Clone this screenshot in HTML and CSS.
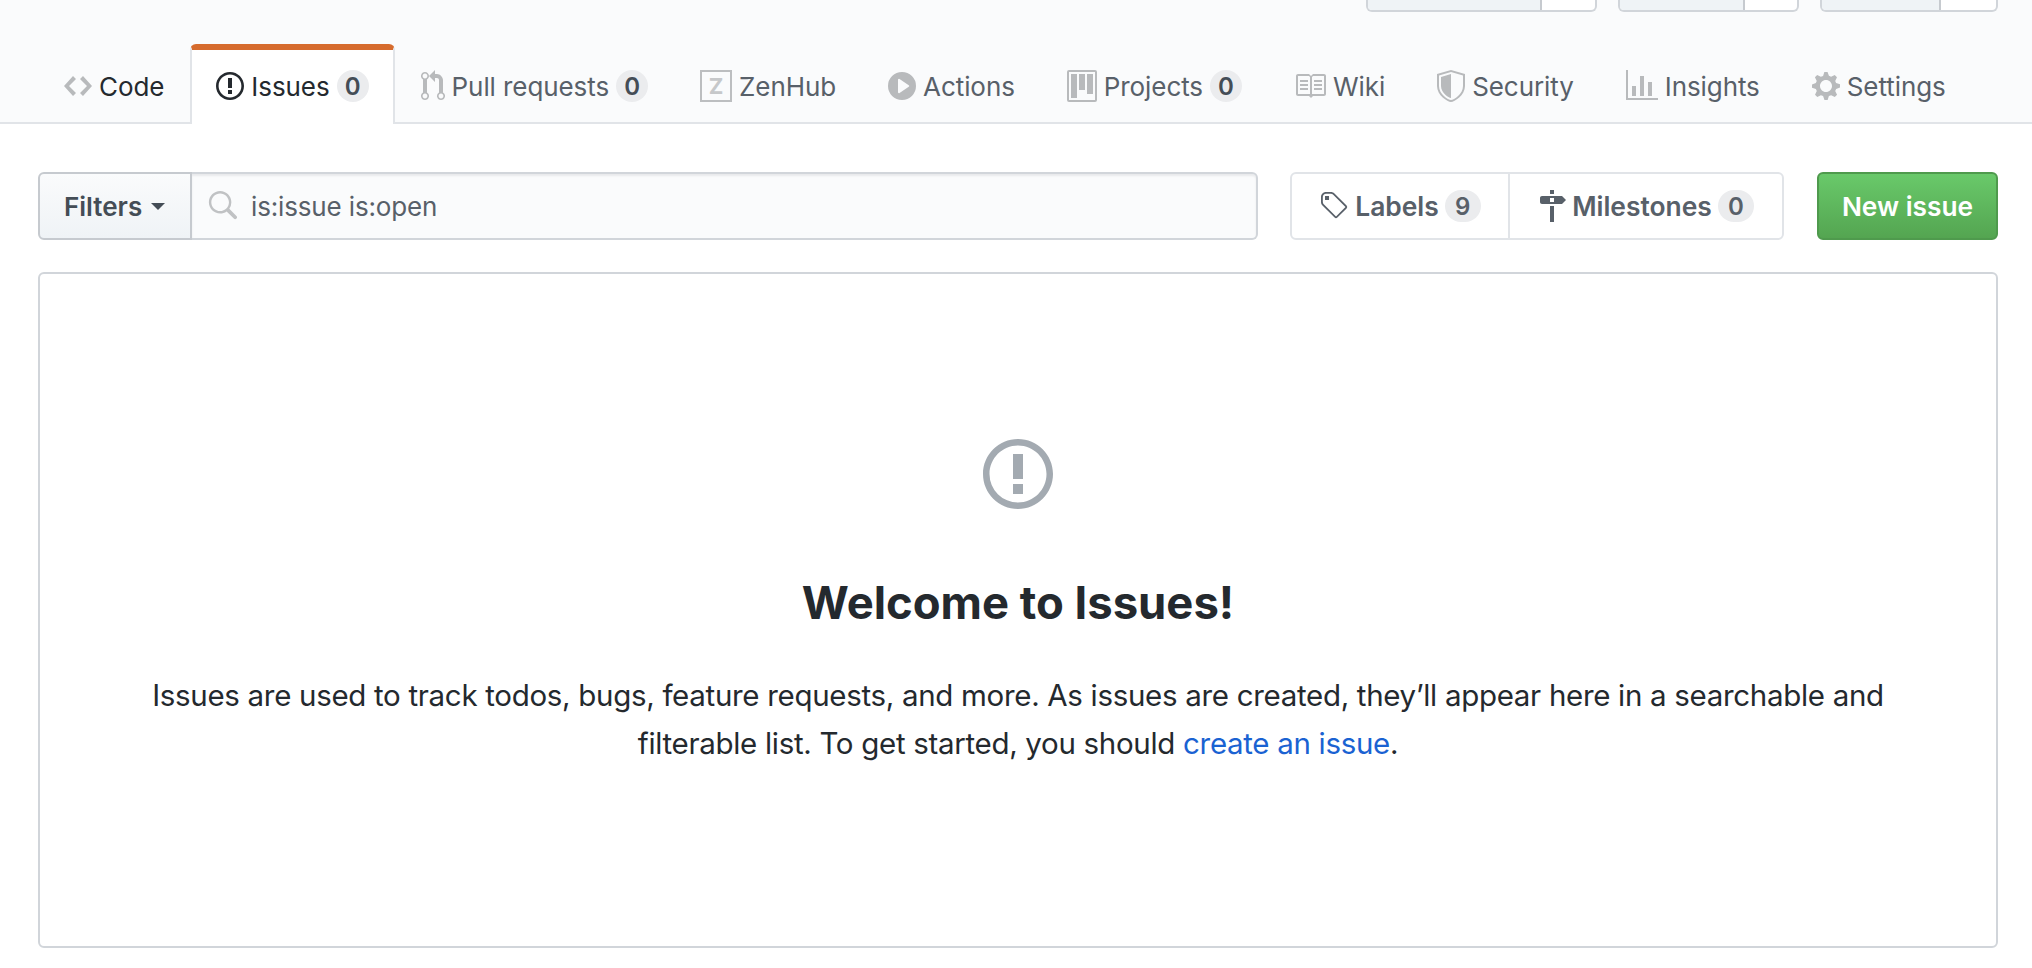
FILE: index.html
```html
<!DOCTYPE html>
<html lang="en">
<head>
<meta charset="utf-8">
<title>Issues</title>
<link rel="stylesheet" href="styles.css">
</head>
<body>
<header class="head">
  <div class="actions">
    <div class="action w1"><span class="action-main"></span><span class="action-count"></span></div>
    <div class="action w2"><span class="action-main"></span><span class="action-count"></span></div>
    <div class="action w3"><span class="action-main"></span><span class="action-count"></span></div>
  </div>
  <nav class="tabs">
    <a class="tab t-code"><svg class="ico" width="28" height="32" viewBox="0 0 14 16"><path d="M9.5 3L8 4.5 11.5 8 8 11.5 9.5 13 14 8 9.5 3zm-5 0L0 8l4.5 5L6 11.5 2.5 8 6 4.5 4.5 3z"/></svg><span class="label-strong">Code</span></a>
    <a class="tab active"><svg class="ico" width="28" height="32" viewBox="0 0 14 16"><path d="M7 2.3c3.14 0 5.7 2.56 5.7 5.7s-2.56 5.7-5.7 5.7A5.71 5.71 0 011.3 8c0-3.14 2.56-5.7 5.7-5.7zM7 1C3.14 1 0 4.14 0 8s3.14 7 7 7 7-3.14 7-7-3.14-7-7-7zm1 3H6v5h2V4zm0 6H6v2h2v-2z"/></svg><span>Issues</span><span class="counter">0</span></a>
    <a class="tab"><svg class="ico" width="24" height="32" viewBox="0 0 12 16"><path d="M11 11.28V5c-.03-.78-.34-1.47-.94-2.06C9.46 2.35 8.78 2.03 8 2H7V0L4 3l3 3V4h1c.27.02.48.11.69.31.21.2.3.42.31.69v6.28A1.993 1.993 0 0010 15a1.993 1.993 0 001-3.72zm-1 2.92c-.66 0-1.2-.55-1.2-1.2 0-.65.55-1.2 1.2-1.2.65 0 1.2.55 1.2 1.2 0 .65-.55 1.2-1.2 1.2zM4 3c0-1.11-.89-2-2-2a1.993 1.993 0 00-1 3.72v6.56A1.993 1.993 0 002 15a1.993 1.993 0 001-3.72V4.72c.59-.34 1-.98 1-1.72zm-.8 10c0 .66-.55 1.2-1.2 1.2-.65 0-1.2-.55-1.2-1.2 0-.65.55-1.2 1.2-1.2.65 0 1.2.55 1.2 1.2zM2 4.2C1.34 4.2.8 3.65.8 3c0-.65.55-1.2 1.2-1.2.65 0 1.2.55 1.2 1.2 0 .65-.55 1.2-1.2 1.2z"/></svg><span>Pull requests</span><span class="counter">0</span></a>
    <a class="tab"><svg class="ico" width="32" height="32" viewBox="0 0 32 32"><rect class="zen-box" x="1" y="1" width="30" height="30"/><text class="zen-z" x="16" y="24">Z</text></svg><span>ZenHub</span></a>
    <a class="tab"><svg class="ico" width="28" height="32" viewBox="0 0 14 16"><path d="M14 8A7 7 0 110 8a7 7 0 0114 0zm-8.223 3.482l4.599-3.066a.5.5 0 000-.832L5.777 4.518A.5.5 0 005 4.934v6.132a.5.5 0 00.777.416z"/></svg><span>Actions</span></a>
    <a class="tab"><svg class="ico" width="30" height="32" viewBox="0 0 15 16"><path fill-rule="evenodd" d="M10 12h3V2h-3v10zm-4-2h3V2H6v8zm-4 4h3V2H2v12zm-1 1h13V1H1v14zM14 0H1a1 1 0 00-1 1v14a1 1 0 001 1h13a1 1 0 001-1V1a1 1 0 00-1-1z"/></svg><span>Projects</span><span class="counter">0</span></a>
    <a class="tab"><svg class="ico" width="32" height="32" viewBox="0 0 16 16"><path d="M3 5h4v1H3V5zm0 3h4V7H3v1zm0 2h4V9H3v1zm11-5h-4v1h4V5zm0 2h-4v1h4V7zm0 2h-4v1h4V9zm2-6v9c0 .55-.45 1-1 1H9.5l-1 1-1-1H2c-.55 0-1-.45-1-1V3c0-.55.45-1 1-1h5.5l1 1 1-1H15c.55 0 1 .45 1 1zm-8 .5L7.5 3H2v9h6V3.5zm7-.5H9.5l-.5.5V12h6V3z"/></svg><span>Wiki</span></a>
    <a class="tab"><svg class="ico" width="28" height="32" viewBox="0 0 14 16"><path fill-rule="evenodd" d="M0 2l7-2 7 2v6.02C14 12.69 8.69 16 7 16c-1.69 0-7-3.31-7-7.98V2zm1 .75L7 1l6 1.75v5.268C13 12.104 8.449 15 7 15c-1.449 0-6-2.896-6-6.982V2.75zm1 .75L7 2v12c-1.207 0-5-2.482-5-5.985V3.5z"/></svg><span>Security</span></a>
    <a class="tab"><svg class="ico" width="32" height="32" viewBox="0 0 16 16"><path d="M16 14v1H0V0h1v14h15zM5 13H3V8h2v5zm4 0H7V3h2v10zm4 0h-2V6h2v7z"/></svg><span>Insights</span></a>
    <a class="tab"><svg class="ico" width="28" height="32" viewBox="0 0 14 16"><path d="M14 8.77v-1.6l-1.94-.64-.45-1.09.88-1.84-1.13-1.13-1.81.91-1.09-.45-.69-1.92h-1.6l-.63 1.94-1.11.45-1.84-.88-1.13 1.13.91 1.81-.45 1.09L0 7.23v1.59l1.94.64.45 1.09-.88 1.84 1.13 1.13 1.81-.91 1.09.45.69 1.92h1.59l.63-1.94 1.11-.45 1.84.88 1.13-1.13-.92-1.81.47-1.09L14 8.75v.02zM7 11c-1.66 0-3-1.34-3-3s1.34-3 3-3 3 1.34 3 3-1.34 3-3 3z"/></svg><span>Settings</span></a>
  </nav>
</header>
<main class="main">
  <div class="toolbar">
    <div class="filter-group">
      <button class="filter-btn">Filters<span class="caret"></span></button>
      <div class="search">
        <svg class="search-ico" width="30" height="30" viewBox="0 0 16 16"><path d="M15.7 13.3l-3.81-3.83A5.93 5.93 0 0013 6c0-3.31-2.69-6-6-6S1 2.69 1 6s2.69 6 6 6c1.3 0 2.48-.41 3.47-1.11l3.83 3.81c.19.2.45.3.7.3.25 0 .52-.09.7-.3a.996.996 0 000-1.41v.01zM7 10.7c-2.59 0-4.7-2.11-4.7-4.7 0-2.59 2.11-4.7 4.7-4.7 2.59 0 4.7 2.11 4.7 4.7 0 2.59-2.11 4.7-4.7 4.7z"/></svg>
        <span>is:issue is:open</span>
      </div>
    </div>
    <div class="links">
      <a class="link-item l-labels"><svg class="link-ico" width="30" height="32" viewBox="0 0 15 16"><path d="M7.73 1.73C7.26 1.26 6.62 1 5.96 1H3.5C2.13 1 1 2.13 1 3.5v2.47c0 .66.27 1.3.73 1.77l6.06 6.06c.39.39 1.02.39 1.41 0l4.59-4.59a.996.996 0 000-1.41L7.73 1.73zM2.38 7.09c-.31-.3-.47-.7-.47-1.13V3.5c0-.88.72-1.59 1.59-1.59h2.47c.42 0 .83.16 1.13.47l6.14 6.13-4.73 4.73-6.13-6.15zM3.01 3h2v2H3V3h.01z"/></svg><span>Labels</span><span class="counter wide">9</span></a>
      <a class="link-item l-miles"><svg class="link-ico" width="28" height="32" viewBox="0 0 14 16"><path d="M8 2H6V0h2v2zm4 5H2c-.55 0-1-.45-1-1V4c0-.55.45-1 1-1h10l2 2-2 2zM8 4H6v2h2V4zM6 16h2V8H6v8z"/></svg><span>Milestones</span><span class="counter wide">0</span></a>
    </div>
    <button class="new-issue">New issue</button>
  </div>
  <section class="blank">
    <svg class="blank-ico" width="70" height="80" viewBox="0 0 14 16"><path d="M7 2.3c3.14 0 5.7 2.56 5.7 5.7s-2.56 5.7-5.7 5.7A5.71 5.71 0 011.3 8c0-3.14 2.56-5.7 5.7-5.7zM7 1C3.14 1 0 4.14 0 8s3.14 7 7 7 7-3.14 7-7-3.14-7-7-7zm1 3H6v5h2V4zm0 6H6v2h2v-2z"/></svg>
    <h2 class="blank-title">Welcome to Issues!</h2>
    <p class="blank-text">Issues are used to track todos, bugs, feature requests, and more. As issues are created, they’ll appear here in a searchable and filterable list. To get started, you should <a class="blank-link">create an issue</a>.</p>
  </section>
</main>
</body>
</html>
```
FILE: styles.css
```css
* { box-sizing: border-box; }
html, body { margin: 0; background: #fff; }
body { font-family: Inter, "Liberation Sans", sans-serif; color: #24292e; font-size: 26px; }

.head { background: #fafbfc; border-bottom: 2px solid #e1e4e8; height: 124px; }
.actions { display: flex; justify-content: flex-end; gap: 21px; height: 12px; padding-right: 34px; }
.action { display: flex; height: 12px; border: 2px solid #d1d5da; border-top: 0; border-radius: 0 0 6px 6px; overflow: hidden; background: #fff; }
.action-main { background: #eff3f6; border-right: 2px solid #c6cacf; }
.w1 { width: 231px; } .w1 .action-main { width: 174px; }
.w2 { width: 181px; } .w2 .action-main { width: 125px; }
.w3 { width: 178px; } .w3 .action-main { width: 119px; }

.tabs { display: flex; align-items: stretch; padding-left: 38px; margin-top: 32px; height: 80px; letter-spacing: -0.08px; }
.tab { display: flex; align-items: center; gap: 7px; padding: 4px 26px 0; color: #586069; white-space: nowrap; }
.tab .ico { fill: #b8babc; flex: none; }
.label-strong { color: #24292e; }
.tab.active { background: #fff; color: #24292e; border: 2px solid #e1e4e8; border-top: 6px solid #d66b2d; border-bottom: 0; border-radius: 6px 6px 0 0; padding: 0 24px 2px; height: 80px; }
.tab.active .ico { fill: #24292e; }
.counter { display: inline-flex; align-items: center; justify-content: center; min-width: 32px; height: 32px; padding: 0 8px; border-radius: 16px; background: #ebecee; color: #444d56; font-size: 24px; font-weight: 600; letter-spacing: 0; }
.zen-box { fill: none; stroke: #bcbec0; stroke-width: 2; }
.zen-z { font-family: Inter, sans-serif; font-size: 22px; font-weight: 700; fill: #c6c8ca; text-anchor: middle; }

.main { padding: 48px 34px 0 38px; }
.toolbar { display: flex; height: 68px; }
.filter-group { display: flex; width: 1220px; }
.filter-btn { display: flex; align-items: center; gap: 9px; flex: none; width: 154px; height: 68px; padding: 0 0 0 24px; font: 600 26px Inter, sans-serif; color: #444d56; background: linear-gradient(#fafbfc, #eff3f6); border: 2px solid #c6cacf; border-radius: 6px 0 0 6px; }
.caret { width: 0; height: 0; border: 7px solid transparent; border-top-color: #444d56; border-bottom: 0; }
.search { flex: 1; display: flex; align-items: center; gap: 14px; padding-left: 15px; background: #fafbfc; border: 2px solid #d1d5da; border-left: 0; border-radius: 0 6px 6px 0; box-shadow: inset 0 2px 2px rgba(27,31,35,.075); color: #586069; letter-spacing: -0.15px; }
.search-ico { fill: #c0c2c4; flex: none; }
.links { display: flex; margin-left: 32px; width: 494px; border: 2px solid #e1e4e8; border-radius: 6px; }
.link-item { display: flex; align-items: center; justify-content: center; gap: 6px; font-size: 26.4px; font-weight: 600; color: #586069; }
.l-labels { width: 218px; border-right: 2px solid #e1e4e8; }
.l-miles { flex: 1; }
.link-ico { fill: #586069; flex: none; }
.counter.wide { min-width: 36px; color: #586069; }
.new-issue { margin-left: 33px; width: 181px; height: 68px; font: 600 26.3px Inter, sans-serif; color: #fff; background: linear-gradient(#69c96a, #54a551); border: 2px solid #4f9a4d; border-radius: 6px; padding: 0; }

.blank { height: 676px; margin-top: 32px; border: 2px solid #d1d5da; border-radius: 6px; padding: 160px 40px 0; text-align: center; }
.blank-ico { display: block; margin: 0 auto; fill: #a3aab1; }
.blank-title { margin: 59px 0 0; font-size: 45.4px; line-height: 60px; font-weight: 700; color: #24292e; }
.blank-text { max-width: 1770px; margin: 38px auto 0; font-size: 29.5px; letter-spacing: -0.31px; line-height: 48px; color: #24292e; }
.blank-link { color: #1a62d2; }
```
